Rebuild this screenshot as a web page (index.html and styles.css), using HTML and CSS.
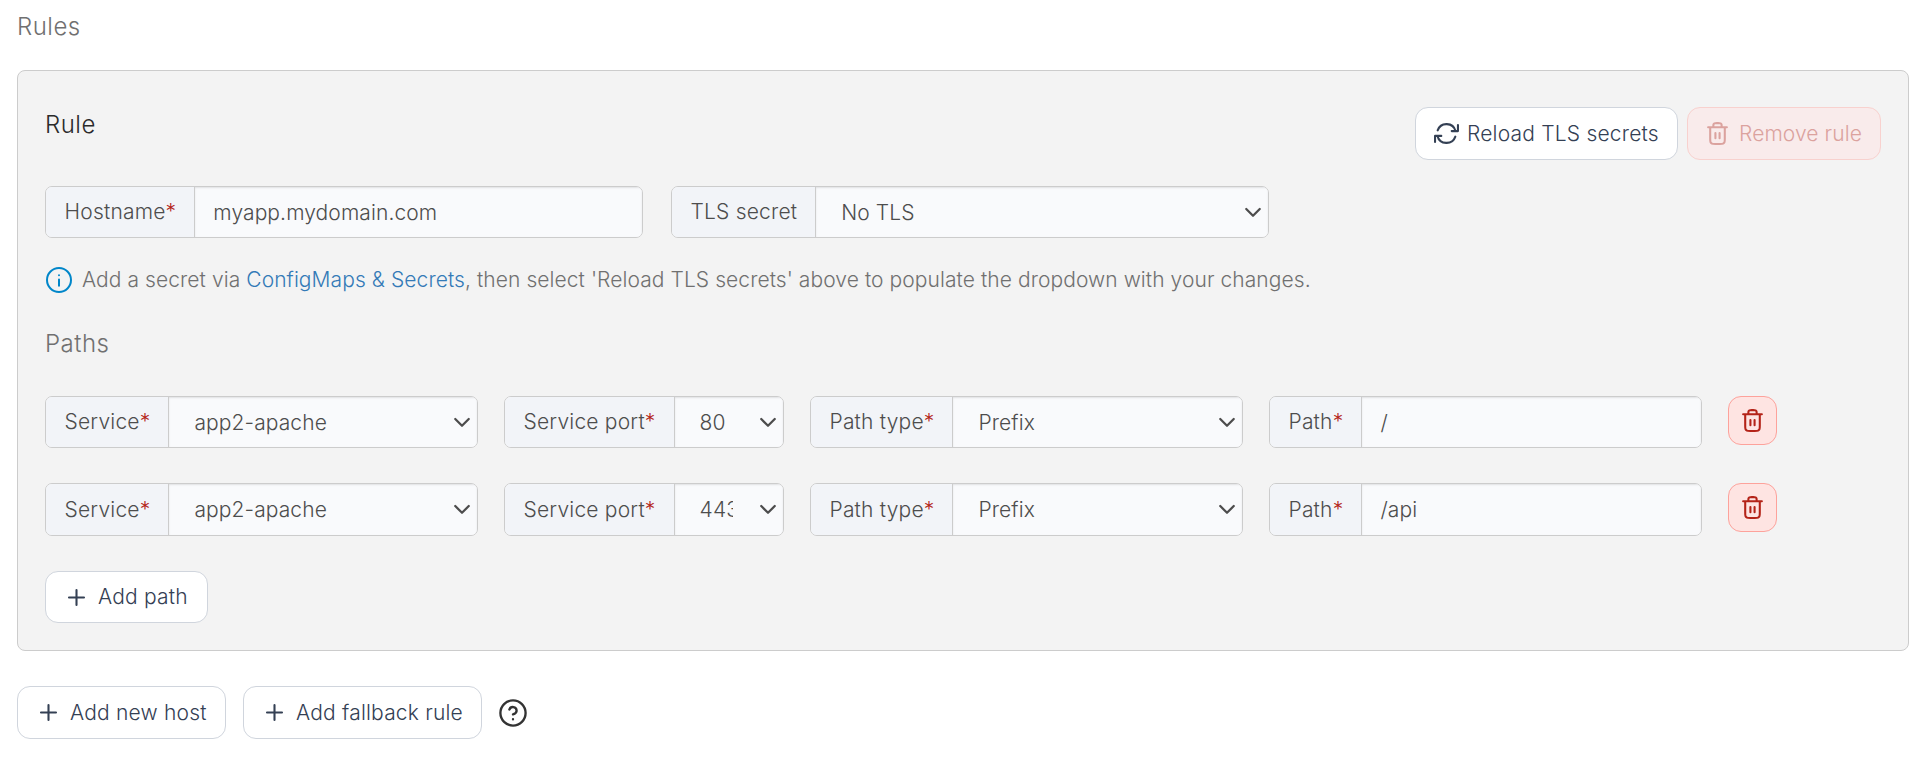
FILE: index.html
```html
<!DOCTYPE html>
<html lang="en">
<head>
<meta charset="utf-8">
<title>Ingress rules</title>
<link rel="stylesheet" href="styles.css">
</head>
<body>
<svg class="defs" aria-hidden="true">
  <symbol id="trash" viewBox="0 0 24 24"><path d="M16 6v-.8c0-1.12 0-1.68-.218-2.108a2 2 0 0 0-.874-.874C14.48 2 13.92 2 12.8 2h-1.6c-1.12 0-1.68 0-2.108.218a2 2 0 0 0-.874.874C8 3.52 8 4.08 8 5.2V6m2 5.5v5m4-5v5M3 6h18m-2 0v11.2c0 1.68 0 2.52-.327 3.162a3 3 0 0 1-1.311 1.311C16.72 22 15.88 22 14.2 22H9.8c-1.68 0-2.52 0-3.162-.327a3 3 0 0 1-1.311-1.311C5 19.72 5 18.88 5 17.2V6"/></symbol>
  <symbol id="plus" viewBox="0 0 24 24"><path d="M12 4.8v14.4M4.8 12h14.4"/></symbol>
  <symbol id="chevron" viewBox="0 0 16 16"><path d="M2 4.5l6 6 6-6"/></symbol>
</svg>
<main class="page">
  <h2 class="title muted">Rules</h2>
  <section class="panel">
    <header class="panel-head">
      <h3 class="title">Rule</h3>
      <div class="actions">
        <button class="btn"><svg class="icon reload" viewBox="0 0 24 24"><path d="M23 3.8v5.9h-6M1 20.2v-5.9h6M3.5 9a9 9 0 0 1 17.2.7M3.3 14.3a9 9 0 0 0 17.2.7"/></svg><span>Reload TLS secrets</span></button>
        <button class="btn danger disabled" disabled><svg class="icon"><use href="#trash"/></svg><span>Remove rule</span></button>
      </div>
    </header>
    <div class="host-row">
      <div class="group"><label>Hostname<i>*</i></label><div class="control">myapp.mydomain.com</div></div>
      <div class="group"><label>TLS secret</label><div class="control select"><span>No TLS</span><svg><use href="#chevron"/></svg></div></div>
    </div>
    <p class="hint"><svg class="info" viewBox="0 0 26 26"><circle cx="13" cy="13" r="12"/><path d="M13 12.6v6.2M13 8.2v.1"/></svg><span>Add a secret via <a>ConfigMaps &amp; Secrets</a>, then select 'Reload TLS secrets' above to populate the dropdown with your changes.</span></p>
    <h3 class="title muted paths-title">Paths</h3>
    <div class="path-row">
      <div class="group"><label>Service<i>*</i></label><div class="control select"><span>app2-apache</span><svg><use href="#chevron"/></svg></div></div>
      <div class="group"><label>Service port<i>*</i></label><div class="control select"><span>80</span><svg><use href="#chevron"/></svg></div></div>
      <div class="group"><label>Path type<i>*</i></label><div class="control select"><span>Prefix</span><svg><use href="#chevron"/></svg></div></div>
      <div class="group"><label>Path<i>*</i></label><div class="control">/</div></div>
      <button class="btn danger square" aria-label="Remove path"><svg class="icon"><use href="#trash"/></svg></button>
    </div>
    <div class="path-row tall">
      <div class="group"><label>Service<i>*</i></label><div class="control select"><span>app2-apache</span><svg><use href="#chevron"/></svg></div></div>
      <div class="group"><label>Service port<i>*</i></label><div class="control select"><span>443</span><svg><use href="#chevron"/></svg></div></div>
      <div class="group"><label>Path type<i>*</i></label><div class="control select"><span>Prefix</span><svg><use href="#chevron"/></svg></div></div>
      <div class="group"><label>Path<i>*</i></label><div class="control">/api</div></div>
      <button class="btn danger square" aria-label="Remove path"><svg class="icon"><use href="#trash"/></svg></button>
    </div>
    <button class="btn add add-path"><svg class="icon"><use href="#plus"/></svg><span>Add path</span></button>
  </section>
  <footer class="footer">
    <button class="btn add add-host"><svg class="icon"><use href="#plus"/></svg><span>Add new host</span></button>
    <button class="btn add add-fallback"><svg class="icon"><use href="#plus"/></svg><span>Add fallback rule</span></button>
    <svg class="help" viewBox="0 0 24 24"><circle cx="12" cy="12" r="10.8"/><path d="M8.9 9a3.2 3.2 0 0 1 6.2 1c0 2.1-3.1 3.1-3.1 3.1M12 17.3v.1"/></svg>
  </footer>
</main>
</body>
</html>
```

FILE: styles.css
```css
* { box-sizing: border-box; }
body { margin: 0; background: #fff; color: #4d4d4d; font: 300 21px/30px Inter, sans-serif; }
.defs { display: none; }
.page { padding: 9px 16px 0 17px; }
.title { margin: 0; font-size: 24px; line-height: 36px; font-weight: 300; letter-spacing: .5px; color: #2b2b2b; }
.muted { color: #707070; }
.panel { height: 581px; margin-top: 25px; padding: 36px 27px 0; background: #f3f3f3; border: 1px solid #ccc; border-radius: 8px; }
.panel-head { display: flex; justify-content: space-between; height: 79px; }
.actions { display: flex; gap: 9px; }
.btn { display: flex; align-items: center; height: 53px; padding: 0 18px; gap: 8px; background: #fff; border: 1px solid #d0d5dd; border-radius: 13px; color: #344054; font: inherit; letter-spacing: .2px; white-space: nowrap; }
.icon { width: 25px; height: 25px; flex: none; }
svg { fill: none; stroke: currentColor; stroke-width: 2; stroke-linecap: round; stroke-linejoin: round; }
.actions .btn { width: 263px; }
.actions .danger { width: 194px; gap: 9px; padding-left: 17px; letter-spacing: .1px; }
.danger { background: #fee4e2; border-color: #fda29b; color: #b42318; }
.disabled { background: #f9ebeb; border-color: #f8d1ce; color: #dba29e; }
.group { display: flex; min-width: 0; border: 1px solid #ccc; border-radius: 7px; background: #f9fafb; overflow: hidden; }
.group label { flex: none; padding: 10px 18px 10px 18.5px; background: #f2f4f8; border-right: 1px solid #ccc; letter-spacing: .2px; }
.group i { color: #b42318; font-style: normal; }
.control { flex: 1; min-width: 0; padding: 11px 18px; background: #f9fafc; box-shadow: inset 0 1px 2px rgba(0,0,0,.1); letter-spacing: .1px; }
.select { display: flex; padding: 11px 6px 9px 25px; justify-content: space-between; align-items: center; }
.select span { min-width: 0; flex: 1; overflow: hidden; white-space: nowrap; }
.select svg { width: 18px; height: 18px; margin-left: 26px; flex: none; }
.host-row { display: grid; grid-template-columns: 598px 598px; gap: 28px; height: 52px; }
.hint { display: flex; align-items: center; gap: 10px; height: 30px; margin: 27px 0 0; color: #707070; white-space: nowrap; letter-spacing: .075px; }
.hint a { color: #337ab7; }
.info { width: 26px; height: 26px; margin-left: 1px; color: #0086c9; }
.paths-title { margin: 31px 0 34px; }
.path-row { display: grid; grid-template-columns: 433px 280px 433px 433px 49px; gap: 26px; height: 52px; margin-bottom: 35px; }
.tall { height: 53px; }
.tall label { padding-top: 11px; }
.tall .select { padding-bottom: 10px; }
.square { width: 49px; height: 49px; padding: 0; justify-content: center; }
.add { gap: 9px; height: 53px; }
.add-path { width: 163px; height: 52px; }
.footer { display: flex; align-items: center; margin-top: 35px; }
.add-host { width: 209px; margin-right: 17px; }
.add-fallback { width: 239px; margin-right: 17px; }
.help { width: 28px; height: 28px; color: #333; }
```
